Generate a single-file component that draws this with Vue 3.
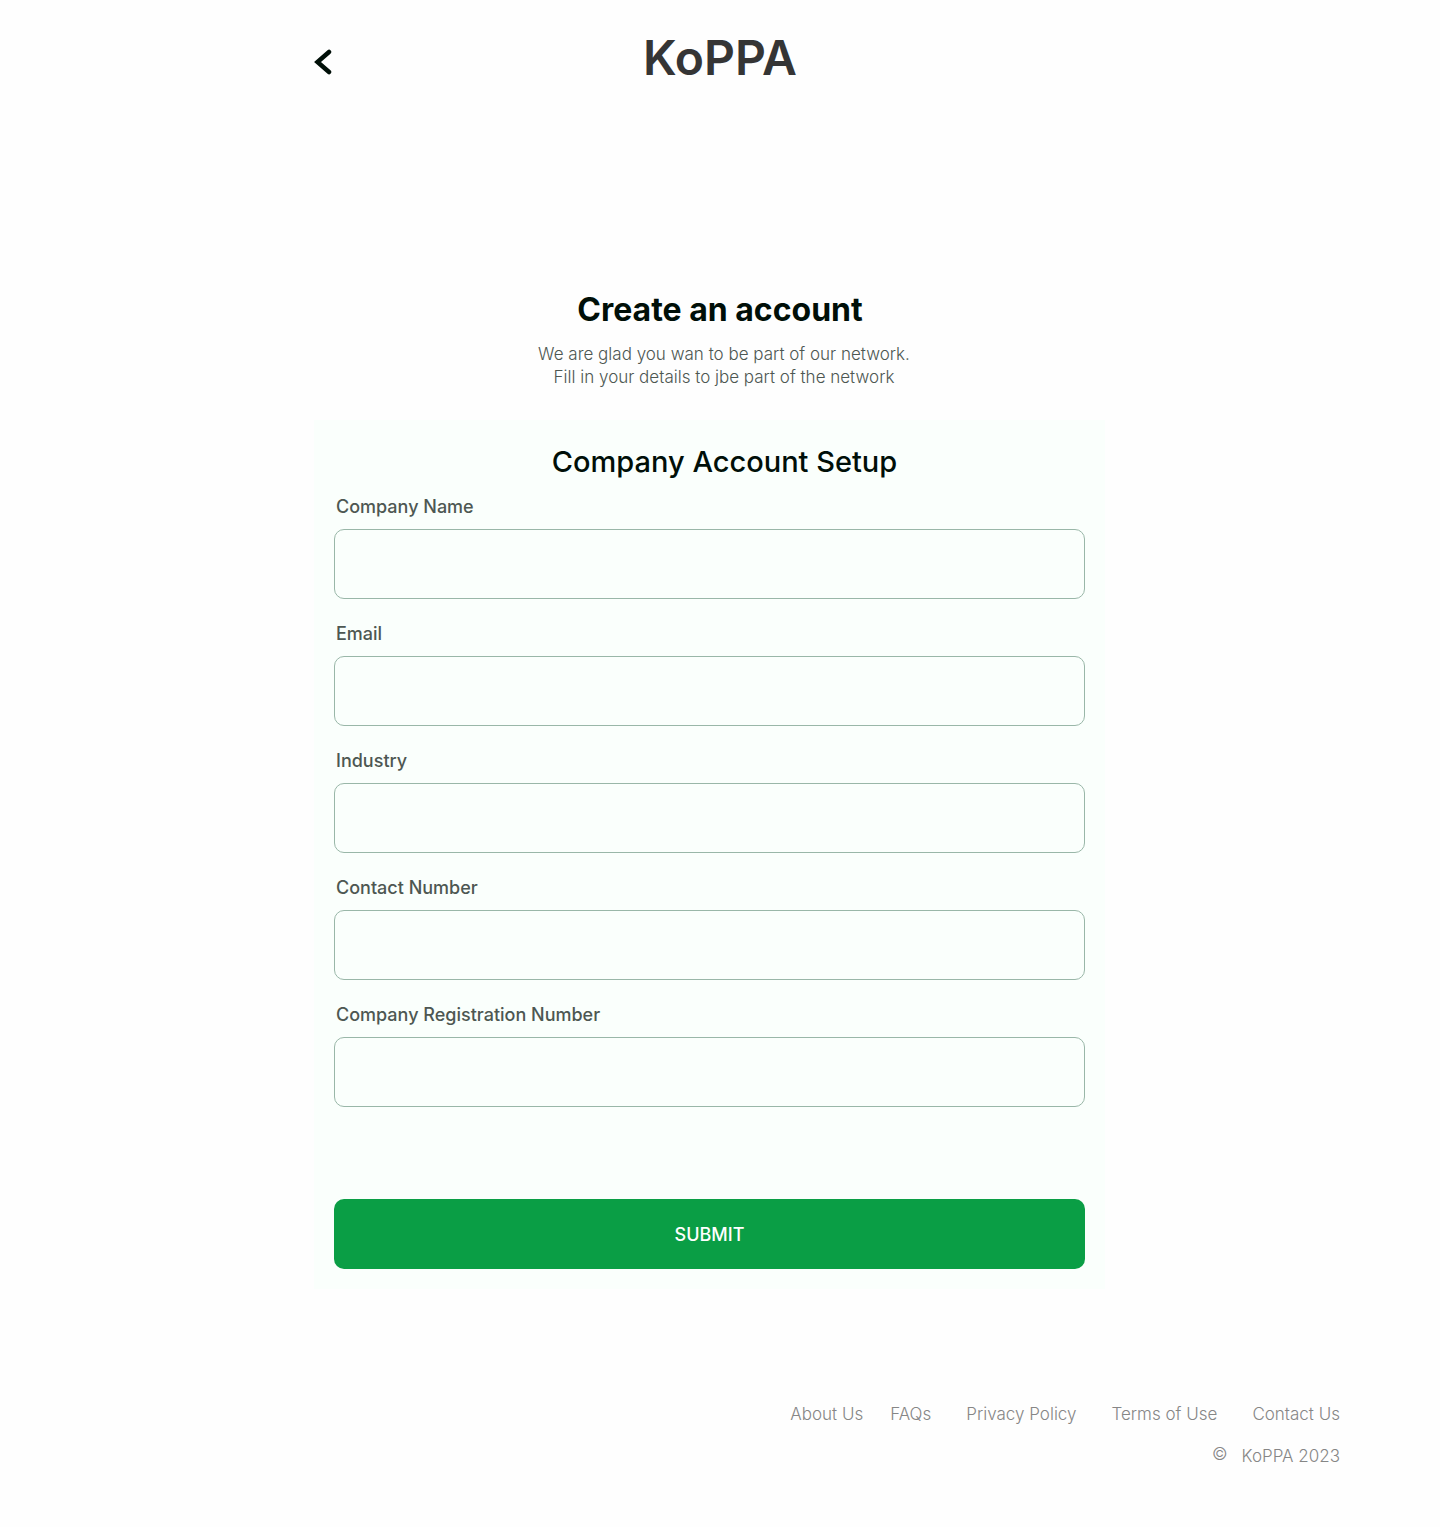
<script setup>
import { reactive } from 'vue'

const fields = [
  { id: 'company-name', label: 'Company Name', type: 'text' },
  { id: 'email', label: 'Email', type: 'email' },
  { id: 'industry', label: 'Industry', type: 'text' },
  { id: 'contact-number', label: 'Contact Number', type: 'tel' },
  { id: 'registration-number', label: 'Company Registration Number', type: 'text' },
]

const form = reactive(Object.fromEntries(fields.map((f) => [f.id, ''])))

const links = ['About Us', 'FAQs', 'Privacy Policy', 'Terms of Use', 'Contact Us']
</script>

<template>
  <div class="page">
    <header class="top">
      <button class="back" type="button" aria-label="Back">
        <svg width="18" height="26" viewBox="0 0 18 26" fill="none">
          <path d="M15 3 3.500 13 15 23" stroke="#000f08" stroke-width="4.500" stroke-linecap="round" stroke-linejoin="miter" />
        </svg>
      </button>
      <div class="logo">KoPPA</div>
    </header>

    <main>
      <div class="intro">
        <h1>Create an account</h1>
        <p>We are glad you wan to be part of our network.<br />Fill in your details to jbe part of the network</p>
      </div>

      <form class="panel" @submit.prevent>
        <h2>Company Account Setup</h2>
        <div v-for="f in fields" :key="f.id" class="field">
          <label :for="f.id">{{ f.label }}</label>
          <input :id="f.id" v-model="form[f.id]" :type="f.type" />
        </div>
        <button class="submit" type="submit">SUBMIT</button>
      </form>
    </main>

    <footer>
      <nav>
        <a v-for="link in links" :key="link" href="#">{{ link }}</a>
      </nav>
      <p class="copyright"><span class="mark">©</span>KoPPA 2023</p>
    </footer>
  </div>
</template>

<style>
body {
  margin: 0;
  background: #fefefe;
}
</style>

<style scoped>
.page {
  font-family: Inter, 'Liberation Sans', sans-serif;
  color: #000f08;
}

.top {
  display: grid;
  grid-template-columns: 1fr auto 1fr;
  align-items: center;
  max-width: 812px;
  height: 52px;
  margin: 0 auto;
  padding-top: 32px;
}

.back {
  justify-self: start;
  display: flex;
  padding: 8px 0 0;
  border: 0;
  background: none;
  cursor: pointer;
}

.logo {
  font-size: 48px;
  line-height: 52px;
  font-weight: 600;
  color: #353535;
}

main {
  max-width: 812px;
  margin: 0 auto;
}

.intro {
  padding-top: 206px;
  text-align: center;
}

h1 {
  margin: 0;
  font-size: 32px;
  line-height: 40px;
  font-weight: 700;
}

.intro p {
  margin: 13px 0 0;
  padding-left: 8px;
  font-size: 17px;
  line-height: 23px;
  font-weight: 300;
  color: #4d5752;
}

.panel {
  box-sizing: border-box;
  max-width: 791px;
  margin-top: 31px;
  padding: 20px;
  background: #fafffc;
}

h2 {
  margin: 0;
  padding-left: 30px;
  font-size: 29px;
  line-height: 44px;
  font-weight: 500;
  text-align: center;
}

.field {
  display: flex;
  flex-direction: column;
  margin-bottom: 12px;
}

label {
  padding-left: 2px;
  margin: 11px 0 10px;
  font-size: 18px;
  line-height: 24px;
  font-weight: 500;
  color: #4d5752;
}

input {
  box-sizing: border-box;
  width: 100%;
  height: 70px;
  padding: 0 20px;
  border: 1px solid #99b7a8;
  border-radius: 10px;
  background: transparent;
  font: inherit;
  font-size: 18px;
}

.submit {
  width: 100%;
  height: 70px;
  margin-top: 80px;
  border: 0;
  border-radius: 10px;
  background: #0a9e45;
  color: #fff;
  font-family: inherit;
  font-size: 18px;
  font-weight: 500;
  cursor: pointer;
}

footer {
  display: flex;
  flex-direction: column;
  align-items: flex-end;
  gap: 18px;
  padding: 113px 100px 59px 20px;
  font-size: 17px;
  line-height: 24px;
  font-weight: 300;
  color: #868686;
}

nav {
  display: flex;
  flex-wrap: wrap;
  gap: 27px;
}

nav a {
  color: inherit;
  text-decoration: none;
}

nav a + a + a {
  margin-left: 8px;
}

.copyright {
  display: flex;
  gap: 14px;
  margin: 0;
}

.mark {
  line-height: 20px;
}
</style>
